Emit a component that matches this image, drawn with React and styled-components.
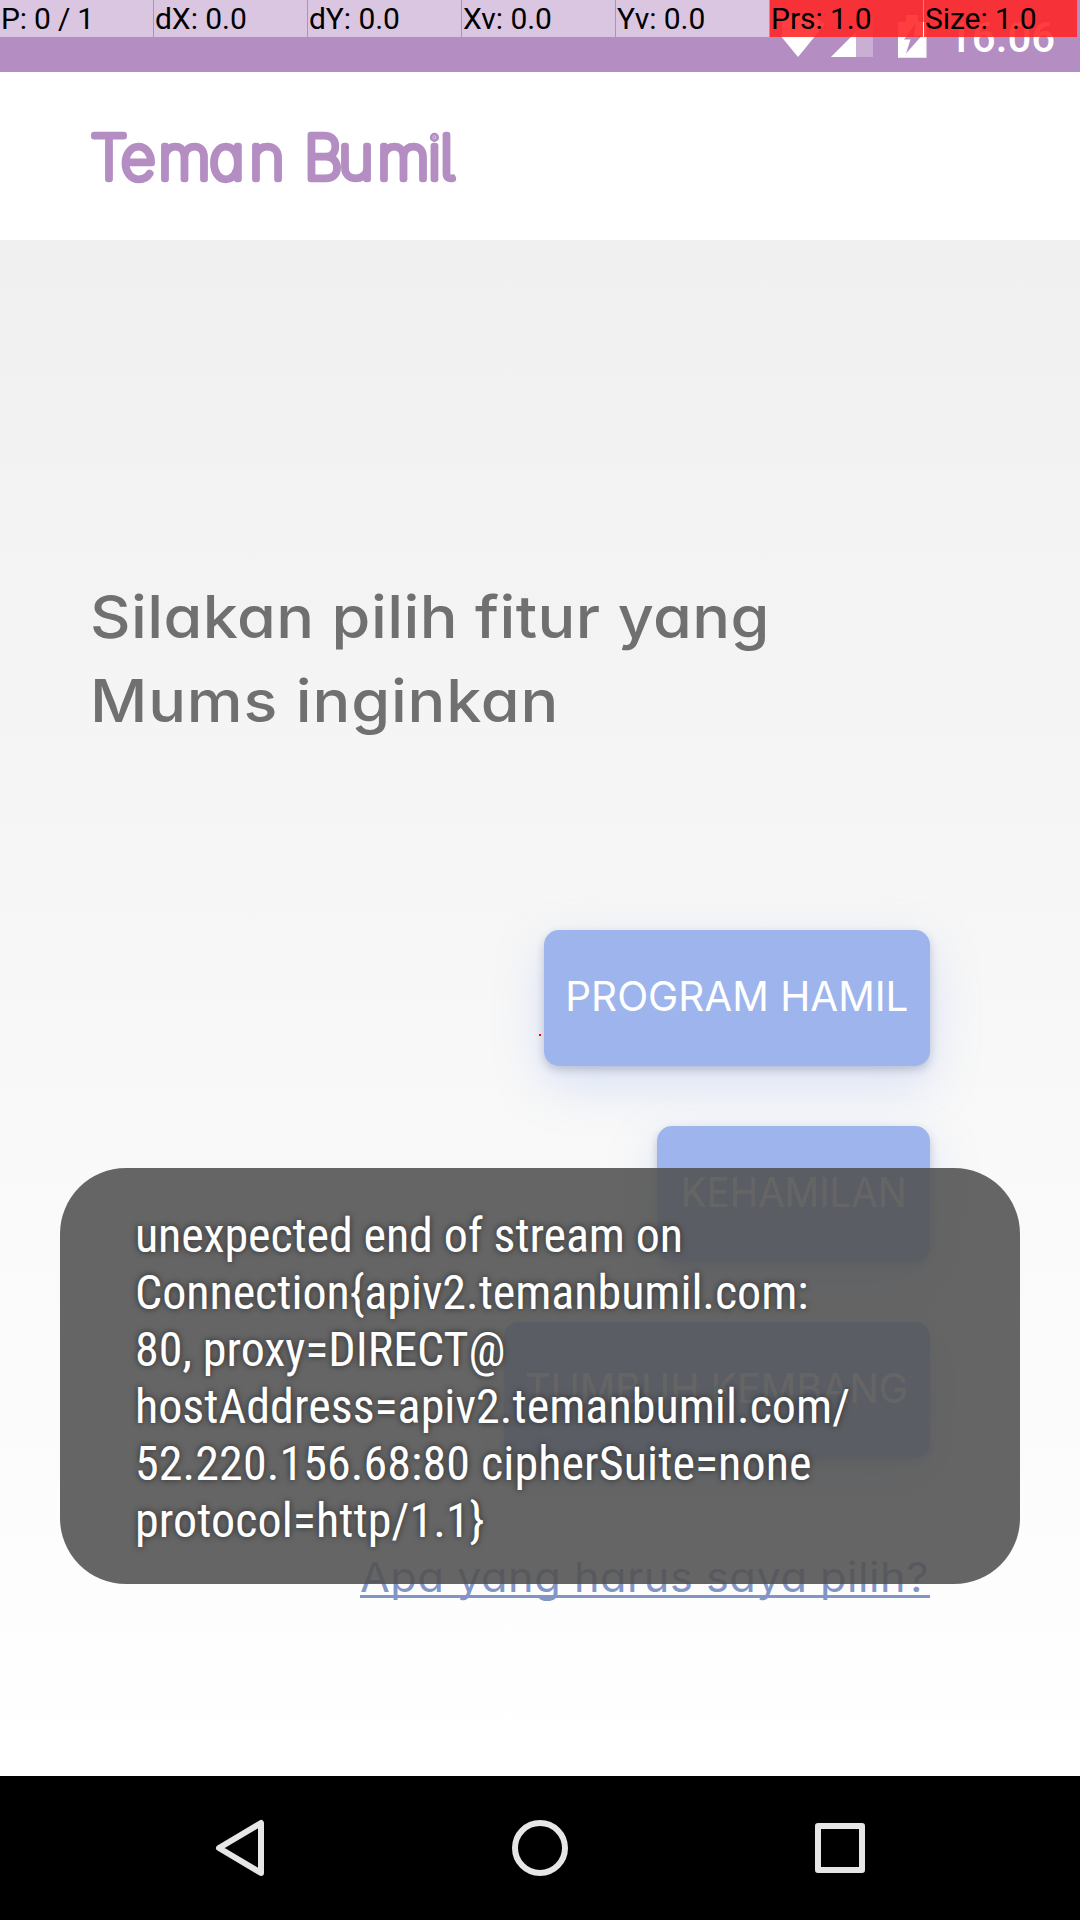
import React from "react";
import styled, { createGlobalStyle } from "styled-components";

const Global = createGlobalStyle`
  * { box-sizing: border-box; }
  body { margin: 0; background: #fff; }
`;

const geometric = `font-family: Inter, "Open Sans", sans-serif; font-feature-settings: "cv11" 1;`;

const Screen = styled.div`
  position: relative;
  width: 1080px;
  height: 1920px;
  overflow: hidden;
  display: flex;
  flex-direction: column;
  background: #fff;
`;

const StatusBar = styled.div`
  height: 72px;
  flex: none;
  display: flex;
  justify-content: flex-end;
  background: #b48dc2;
`;

const StatusIcons = styled.svg`
  width: 160px;
  height: 72px;
`;

const Clock = styled.div`
  width: 138px;
  padding-left: 6px;
  font: 500 42px/75px Roboto, sans-serif;
  color: #fff;
`;

const Header = styled.header`
  height: 168px;
  flex: none;
  padding: 48px 0 0 80px;
  background: #fff;
`;

const Logo = styled.svg`
  display: block;
  width: 400px;
  height: 76px;
  font-family: Inter, "Open Sans", sans-serif;
  font-feature-settings: "cv11" 1, "cv05" 1;
  font-weight: 100;
  font-size: 60px;
  fill: #b48dc2;
  stroke: #b48dc2;
  stroke-width: 6.4px;
  stroke-linejoin: round;
  stroke-linecap: round;
`;

const Main = styled.main`
  flex: 1;
  display: flex;
  flex-direction: column;
  background: linear-gradient(#f0f0f0, #fff);
  padding: 335px 150px 0 90px;
`;

const Prompt = styled.h2`
  margin: 0 0 187px;
  height: 168px;
  ${geometric}
  font-weight: 500;
  font-size: 59px;
  line-height: 84px;
  color: #707070;
  white-space: nowrap;
`;

const Line = styled.span`
  display: block;
  width: max-content;
  letter-spacing: ${(p) => p.$ls || 0}px;
  transform: scaleX(${(p) => p.$stretch || 1});
  transform-origin: ${(p) => (p.$centered ? "center" : "left")};
`;

const Actions = styled.div`
  display: flex;
  flex-direction: column;
  align-items: flex-end;
  gap: 60px;
`;

const Action = styled.button`
  width: ${(p) => p.$width}px;
  height: 136px;
  border: 0;
  padding: 0 0 4px;
  display: flex;
  align-items: center;
  justify-content: center;
  border-radius: 15px;
  background: #9db5ec;
  box-shadow: 0 4px 8px rgba(60, 70, 100, 0.25), 0 18px 50px rgba(120, 155, 240, 0.26);
  ${geometric}
  font-size: 41px;
  font-weight: 400;
  color: #fff;
`;

const Help = styled.a`
  align-self: flex-end;
  width: 570px;
  height: 48px;
  margin-top: 92px;
  border-bottom: 3px solid #8296c6;
  ${geometric}
  font-size: 41px;
  line-height: 55px;
  color: #8296c6;
  white-space: nowrap;
`;

const NavBar = styled.nav`
  height: 144px;
  flex: none;
  display: flex;
  justify-content: center;
  align-items: center;
  gap: 240px;
  background: #000;
`;

const NavIcon = styled.svg`
  width: 60px;
  height: 60px;
  fill: none;
  stroke: #e6e6e6;
  stroke-width: 6;
  stroke-linejoin: round;
`;

const Toast = styled.div`
  position: absolute;
  left: 60px;
  top: 1168px;
  width: 960px;
  height: 416px;
  padding: 39px 75px;
  border-radius: 66px;
  background: rgba(82, 82, 82, 0.89);
  font: 400 48px/57px "Roboto Condensed", Roboto, sans-serif;
  font-stretch: 75%;
  color: #fff;
  text-shadow: 0 0 6px rgba(0, 0, 0, 0.6);
  white-space: nowrap;
`;

const PointerBar = styled.div`
  position: absolute;
  left: 0;
  top: 0;
  display: flex;
  gap: 1px;
`;

const PointerCell = styled.div`
  width: 153px;
  height: 37px;
  padding-left: 1px;
  font: 400 30px/37px Roboto, sans-serif;
  letter-spacing: ${(p) => p.$ls || 0}px;
  color: #000;
  white-space: pre;
  background: ${(p) => (p.$hot ? "rgba(255, 36, 36, 0.88)" : "rgba(255, 255, 255, 0.5)")};
`;

const PointerDot = styled.div`
  position: absolute;
  left: 539px;
  top: 1034px;
  width: 2px;
  height: 2px;
  background: #f00;
`;

const cells = ["P: 0 / 1", "dX: 0.0", "dY: 0.0", "Xv: 0.0", "Yv: 0.0", "Prs: 1.0", "Size: 1.0"];

const toast = [
  ["unexpected end of stream on", -0.12],
  ["Connection{apiv2.temanbumil.com:", -0.04],
  ["80, proxy=DIRECT@", 0],
  ["hostAddress=apiv2.temanbumil.com/", 0.04],
  ["52.220.156.68:80 cipherSuite=none", 0.09],
  ["protocol=http/1.1}", 0.1],
];

const actions = [
  { label: "PROGRAM HAMIL", width: 386, stretch: 0.987 },
  { label: "KEHAMILAN", width: 273, stretch: 0.935 },
  { label: "TUMBUH KEMBANG", width: 426, stretch: 0.96 },
];

export default function App() {
  return (
    <Screen>
      <Global />
      <StatusBar>
        <StatusIcons viewBox="782 0 160 72">
          <path d="M798 57 L771 24 Q798 5 825 24Z" fill="#fff" />
          <path d="M873 15V57H831Z" fill="#fff" opacity=".3" />
          <path d="M856 32V57H831Z" fill="#fff" />
          <path
            fillRule="evenodd"
            d="M898 22H906V15H918V22H926.5V57.7H898Z M916 23L904 39.5H910.5L906 53.5L921.5 36H914Z"
            fill="#fff"
          />
        </StatusIcons>
        <Clock>16.06</Clock>
      </StatusBar>
      <Header>
        <Logo viewBox="80 120 400 76">
          <text x="90.5 121 158.5 209.5 249.5" y="178.8">Teman</text>
          <text x="304 338.5 377.5 428 440" y="178.8">Bumil</text>
        </Logo>
      </Header>
      <Main>
        <Prompt>
          <Line $stretch={1.065} $ls={0.4}>Silakan pilih fitur yang</Line>
          <Line $stretch={1.065} $ls={0.8}>Mums inginkan</Line>
        </Prompt>
        <Actions>
          {actions.map((a) => (
            <Action key={a.label} $width={a.width}>
              <Line $centered $stretch={a.stretch}>{a.label}</Line>
            </Action>
          ))}
        </Actions>
        <Help><Line $stretch={1.055} $ls={0.5}>Apa yang harus saya pilih?</Line></Help>
      </Main>
      <NavBar>
        <NavIcon viewBox="0 0 60 60"><path d="M51 5V55L9 30Z" /></NavIcon>
        <NavIcon viewBox="0 0 60 60"><circle cx="30" cy="30" r="25" /></NavIcon>
        <NavIcon viewBox="0 0 60 60"><rect x="8" y="8" width="44" height="44" /></NavIcon>
      </NavBar>
      <Toast>{toast.map(([t, ls]) => <Line key={t} $ls={ls}>{t}</Line>)}</Toast>
      <PointerBar>
        {cells.map((c, i) => (
          <PointerCell key={c} $hot={i > 4} $ls={i === 0 ? -0.2 : -0.05}>{c}</PointerCell>
        ))}
      </PointerBar>
      <PointerDot />
    </Screen>
  );
}
